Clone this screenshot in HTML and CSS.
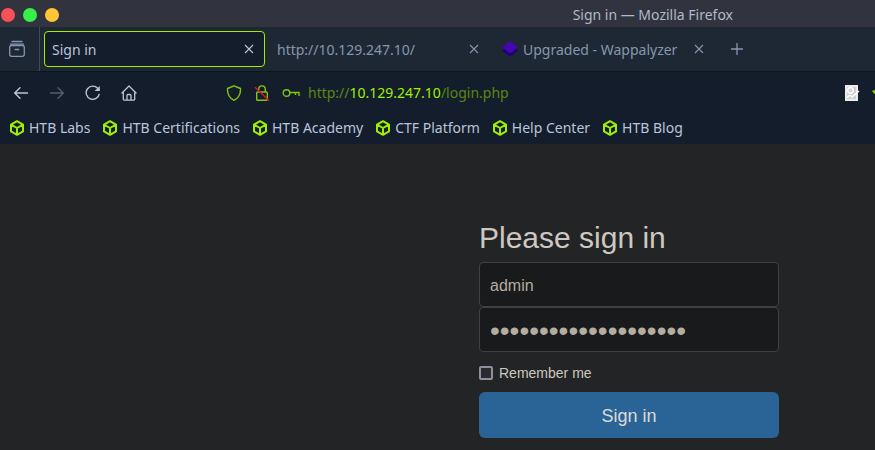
FILE: index.html
```html
<!DOCTYPE html>
<html lang="en">
<head>
  <meta charset="UTF-8">
  <meta name="viewport" content="width=device-width, initial-scale=1.0">
  <title>Sign in</title>
  <link rel="stylesheet" href="styles.css">
</head>
<body>
  <svg class="sprite" aria-hidden="true">
    <symbol id="cube" viewBox="0 0 16 16">
      <path d="M8 1.2 14 4.6v6.8L8 14.8 2 11.4V4.6zM2 4.6 8 8l6-3.4M8 8v6.8" fill="none" stroke="currentColor" stroke-width="2" stroke-linejoin="round"/>
    </symbol>
    <symbol id="close" viewBox="0 0 16 16">
      <path d="m4 4 8 8m0-8-8 8" fill="none" stroke="currentColor" stroke-width="1.1"/>
    </symbol>
  </svg>

  <header class="browser">
    <div class="title-bar">
      <div class="window-buttons">
        <button class="dot red" aria-label="Close window"></button>
        <button class="dot green" aria-label="Maximize"></button>
        <button class="dot yellow" aria-label="Minimize"></button>
      </div>
      <span class="window-title">Sign in — Mozilla Firefox</span>
    </div>

    <div class="tab-bar">
      <button class="recent" aria-label="Recent tabs">
        <svg width="18" height="18" viewBox="0 0 18 18" fill="none" stroke="currentColor" stroke-width="1.3" stroke-linecap="round">
          <path d="M4 1.5h10M2.5 4.2h13"/>
          <rect x="1.7" y="5.5" width="14.6" height="10.8" rx="2"/>
          <path d="M7.2 9.5h3.6"/>
        </svg>
      </button>
      <div class="tab active">
        <span class="tab-label">Sign in</span>
        <button class="tab-close" aria-label="Close tab"><svg width="16" height="16"><use href="#close"/></svg></button>
      </div>
      <div class="tab">
        <span class="tab-label">http://10.129.247.10/</span>
        <button class="tab-close" aria-label="Close tab"><svg width="16" height="16"><use href="#close"/></svg></button>
      </div>
      <div class="tab">
        <svg width="16" height="16" viewBox="0 0 16 16">
          <path d="M0 9.6 8 4l8 5.6-8 6.2z" fill="#1f0279"/>
          <path d="m8 0 8 6.3-8 6.2-8-6.2z" fill="#4608ad"/>
        </svg>
        <span class="tab-label">Upgraded - Wappalyzer</span>
        <button class="tab-close" aria-label="Close tab"><svg width="16" height="16"><use href="#close"/></svg></button>
      </div>
      <button class="new-tab" aria-label="New tab">
        <svg width="16" height="16" viewBox="0 0 16 16"><path d="M8 2v12M2 8h12" stroke="currentColor" stroke-width="1.3"/></svg>
      </button>
    </div>

    <nav class="nav-bar">
      <div class="nav-buttons">
        <button aria-label="Back">
          <svg width="16" height="16" viewBox="0 0 16 16" fill="none" stroke="currentColor" stroke-width="1.4" stroke-linecap="round"><path d="M14.5 8H1.8M7 2.7 1.7 8 7 13.3"/></svg>
        </button>
        <button aria-label="Forward" disabled>
          <svg width="16" height="16" viewBox="0 0 16 16" fill="none" stroke="currentColor" stroke-width="1.4" stroke-linecap="round"><path d="M1.5 8h12.7M9 2.7 14.3 8 9 13.3"/></svg>
        </button>
        <button aria-label="Reload">
          <svg width="16" height="16" viewBox="0 0 16 16" fill="none" stroke="currentColor" stroke-width="1.4"><path d="M14.3 8.8A6.6 6.6 0 1 1 12.6 3.2"/><path d="M14.8 1v5H9.6z" fill="currentColor" stroke="none"/></svg>
        </button>
        <button aria-label="Home">
          <svg width="16" height="16" viewBox="0 0 16 16" fill="none" stroke="currentColor" stroke-width="1.3" stroke-linejoin="round" stroke-linecap="round"><path d="M1 8 8 1l7 7M2.3 7v7.3a.8.8 0 0 0 .8.8h9.8a.8.8 0 0 0 .8-.8V7M6 15v-4.500a1 1 0 0 1 1-1h2a1 1 0 0 1 1 1V15"/></svg>
        </button>
      </div>
      <div class="url-bar">
        <svg width="16" height="16" viewBox="0 0 16 16" fill="none" stroke="currentColor" stroke-width="1.4" stroke-linejoin="round"><path d="M8 .8 14.5 3.5C14.8 9 12.5 13.2 8 15.3 3.5 13.2 1.2 9 1.5 3.5z"/></svg>
        <svg width="16" height="16" viewBox="0 0 16 16" fill="none" stroke="currentColor" stroke-width="1.4"><rect x="2.7" y="7" width="10.6" height="8.2" rx="1"/><path d="M4.700 5V4.200a3.300 3.300 0 0 1 6.600 0V7"/><path d="m1 2.200 14 13.300" stroke="#e0143c"/></svg>
        <svg width="18" height="16" viewBox="0 0 18 16" fill="none" stroke="currentColor" stroke-width="1.4"><circle cx="4.5" cy="8" r="3.3"/><path d="M8 7.500h9v3.500M13.500 7.500V10"/></svg>
        <span class="url">http://<span class="host">10.129.247.10</span>/login.php</span>
      </div>
      <div class="page-actions">
        <svg width="16" height="16" viewBox="0 0 16 16">
          <path d="M1 0h13v16H1z" fill="#ececec"/>
          <path d="M3 2h9v12H3z" fill="#cfcfcf"/>
          <circle cx="6.5" cy="5.5" r="2.8" fill="#d6d6d6" stroke="#fff" stroke-width="1.3"/>
          <path d="M3 12.500c3-3 4-2 5-.5L15 6" fill="none" stroke="#fff" stroke-width="1.6"/>
        </svg>
        <svg width="16" height="16" viewBox="0 0 16 16" fill="none" stroke="#9fef00" stroke-width="1.3" stroke-linejoin="round"><path d="m8 1 2.100 4.500 5 .6-3.700 3.400 1 4.900L8 12l-4.400 2.400 1-4.900L.9 6.100l5-.6z"/></svg>
      </div>
    </nav>

    <div class="bookmarks">
      <a href="#"><svg width="16" height="16"><use href="#cube"/></svg>HTB Labs</a>
      <a href="#"><svg width="16" height="16"><use href="#cube"/></svg>HTB Certifications</a>
      <a href="#"><svg width="16" height="16"><use href="#cube"/></svg>HTB Academy</a>
      <a href="#"><svg width="16" height="16"><use href="#cube"/></svg>CTF Platform</a>
      <a href="#"><svg width="16" height="16"><use href="#cube"/></svg>Help Center</a>
      <a href="#"><svg width="16" height="16"><use href="#cube"/></svg>HTB Blog</a>
    </div>
  </header>

  <main class="page">
    <form class="form-signin">
      <h2>Please sign in</h2>
      <input type="text" class="form-control" aria-label="Username" value="admin">
      <input type="password" class="form-control" aria-label="Password" value="aaaaaaaaaaaaaaaaaaaa">
      <label class="checkbox"><input type="checkbox"> Remember me</label>
      <button class="btn" type="submit">Sign in</button>
    </form>
  </main>
</body>
</html>
```

FILE: styles.css
```css
:root {
  --green: #9fef00;
  --chrome: #141d2b;
  --tabs: #1e2734;
  --text: #b9c5dd;
  --muted: #8497ae;
}

* {
  margin: 0;
  padding: 0;
  box-sizing: border-box;
}

body {
  font-family: "Liberation Sans", Arial, sans-serif;
  background-color: #232425;
  min-height: 100vh;
  overflow-x: hidden;
}

button {
  background: none;
  border: none;
  color: inherit;
  font: inherit;
}

svg {
  display: block;
  flex-shrink: 0;
}

.sprite {
  display: none;
}

.browser {
  font-family: "Noto Sans", sans-serif;
  font-size: 14px;
  line-height: 20px;
  color: var(--text);
  background-color: var(--chrome);
  white-space: nowrap;
}

.title-bar {
  display: flex;
  justify-content: space-between;
  align-items: center;
  height: 27px;
  padding: 2px 142px 0 0;
  background-color: #31343f;
  color: #b3b9c6;
}

.window-buttons {
  display: flex;
  gap: 8px;
  padding-left: 1px;
}

.dot {
  width: 14px;
  height: 14px;
  border-radius: 50%;
}

.red {
  background-color: #f75057;
}

.green {
  background-color: #38ee48;
}

.yellow {
  background-color: #ffc534;
}

.tab-bar {
  display: flex;
  align-items: center;
  height: 45px;
  background-color: var(--tabs);
  border-bottom: 1px solid #0e141e;
  color: var(--muted);
}

.recent {
  display: flex;
  align-items: center;
  align-self: stretch;
  padding: 0 13px 0 8px;
  margin-right: 4px;
  border-right: 1px solid #424b58;
}

.tab {
  display: flex;
  align-items: center;
  gap: 5px;
  flex: 0 1 221px;
  min-width: 0;
  height: 36px;
  margin-right: 4px;
  padding: 0 8px;
  border-radius: 4px;
}

.tab.active {
  border: 1px solid var(--green);
  padding: 0 7px;
  background-color: var(--chrome);
  color: var(--text);
}

.tab-label {
  flex: 1;
  padding-top: 2px;
  overflow: hidden;
}

.new-tab {
  padding: 0 10px;
}

.nav-bar {
  display: flex;
  align-items: center;
  height: 40px;
  padding-top: 1px;
  overflow: hidden;
}

.nav-buttons {
  display: flex;
  gap: 20px;
  padding-left: 13px;
}

.nav-buttons button:disabled {
  color: #535e6f;
}

.url-bar {
  flex: 1;
  display: flex;
  align-items: center;
  gap: 12px;
  margin-left: 89px;
  color: #83c507;
}

.url {
  margin-left: -4px;
  color: #5a8714;
}

.host {
  color: var(--green);
}

.page-actions {
  display: flex;
  gap: 12px;
  margin-right: -13px;
}

.bookmarks {
  display: flex;
  gap: 12px;
  height: 32px;
  padding-left: 9px;
}

.bookmarks a {
  display: flex;
  align-items: center;
  gap: 4px;
  color: var(--text);
  text-decoration: none;
}

.bookmarks svg {
  color: var(--green);
}

.page {
  display: flex;
  justify-content: flex-end;
  padding: 77px 96px 12px 16px;
}

.form-signin {
  display: flex;
  flex-direction: column;
  width: 100%;
  max-width: 300px;
}

.form-signin h2 {
  margin-bottom: 8px;
  font-size: 30px;
  font-weight: 400;
  line-height: 33px;
  color: #cdc8c0;
}

.form-control {
  width: 100%;
  height: 45px;
  padding: 2px 10px 0;
  background-color: #191a1b;
  border: 1px solid #3c4243;
  border-radius: 4px;
  color: #b5ada0;
  font-family: inherit;
  font-size: 16px;
}

.form-control[type="password"] {
  font-size: 28px;
}

.checkbox {
  display: flex;
  align-items: center;
  gap: 6px;
  margin: 11px 0 9px;
  font-size: 14px;
  line-height: 20px;
  color: #cdc8c0;
}

.checkbox input {
  appearance: none;
  width: 14px;
  height: 14px;
  border: 2px solid #8f8f9d;
  border-radius: 2px;
  background-color: #2b2a33;
}

.btn {
  height: 46px;
  padding-top: 2px;
  border-radius: 6px;
  background-color: #2a6496;
  color: #dedbd6;
  font-size: 18px;
}
```
